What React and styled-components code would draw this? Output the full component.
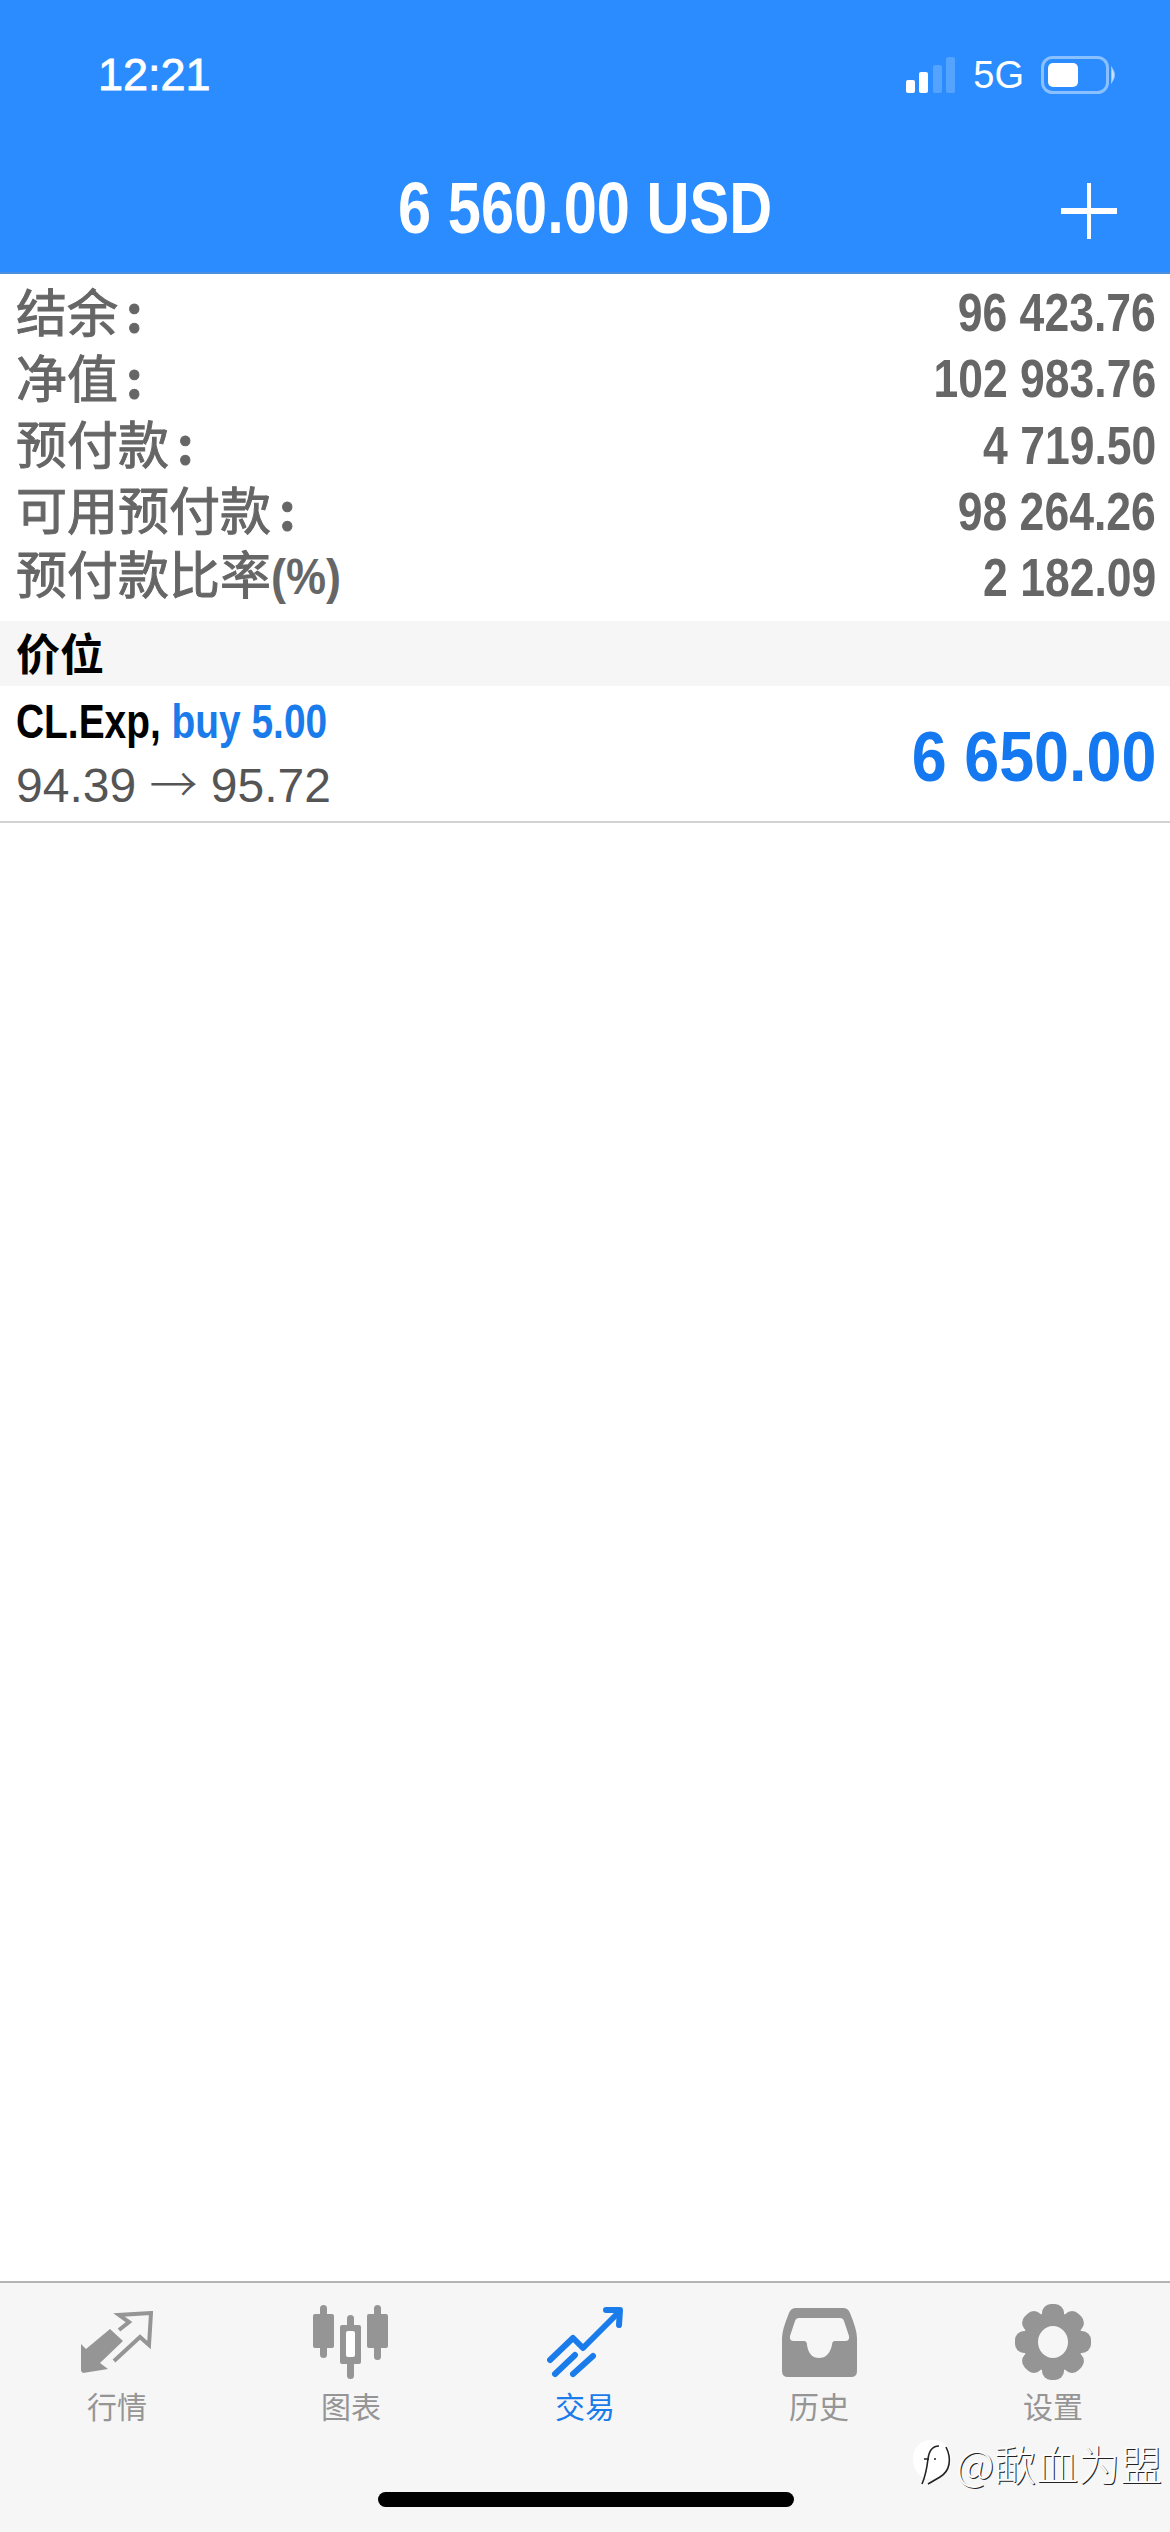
import React from "react";
import styled, { createGlobalStyle } from "styled-components";

const GlobalStyle = createGlobalStyle`
  html, body {
    margin: 0;
    padding: 0;
    background: #fff;
  }
  * {
    box-sizing: border-box;
  }
`;

const sans = `"Liberation Sans", "Noto Sans CJK SC", sans-serif`;
const cjk = `"Noto Sans CJK SC", sans-serif`;

const Page = styled.div`
  position: relative;
  width: 1170px;
  height: 2532px;
  display: flex;
  flex-direction: column;
  background: #fff;
  overflow: hidden;
`;

const Header = styled.header`
  height: 274px;
  background: #2a8cff;
  border-bottom: 2px solid #4a8fe0;
  color: #fff;
  display: flex;
  flex-direction: column;
`;

const StatusBar = styled.div`
  height: 150px;
  padding: 50px 53px 0 98px;
  display: flex;
  justify-content: space-between;
  align-items: flex-start;
`;

const Time = styled.span`
  font: 400 45px/50px ${sans};
  -webkit-text-stroke: 0.8px #fff;
`;

const StatusIcons = styled.div`
  display: flex;
  align-items: center;
  height: 50px;
  gap: 17px;
`;

const Network = styled.span`
  font: 400 38px/50px ${sans};
`;

const TitleBar = styled.div`
  position: relative;
  display: flex;
  justify-content: center;
  height: 100px;
  padding-top: 18px;
`;

/* the app's bold face is a condensed one, so the nearest installed face is squeezed */
const Condensed = styled.span`
  display: inline-block;
  white-space: nowrap;
  transform: scaleX(${(p) => p.$scale});
  transform-origin: ${(p) => p.$origin || "right"} center;
`;

const Title = styled.h1`
  margin: 0;
  font: 700 72px/80px ${sans};
`;

const AddButton = styled.svg`
  position: absolute;
  right: 53px;
  top: 33px;
`;

const Summary = styled.section`
  padding: 7px 14px 9px 16px;
`;

const SummaryRow = styled.div`
  height: 66.25px;
  display: flex;
  justify-content: space-between;
  align-items: center;
  color: #666;
`;

const SummaryLabel = styled.span`
  padding-bottom: 9px;
  font: 400 51px/60px ${cjk};
  -webkit-text-stroke: 1px #666;
`;

const Colon = styled.span`
  margin-left: 8px;
  font-weight: 700;
`;

const Percent = styled.span`
  display: inline-block;
  font: 700 50px/60px ${sans};
  -webkit-text-stroke: 0;
  transform: scaleX(0.9);
  transform-origin: left center;
`;

const SummaryValue = styled.span`
  padding-bottom: 2px;
  font: 700 53px/60px ${sans};
`;

const SectionBand = styled.div`
  height: 65px;
  padding-left: 16px;
  background: #f6f6f6;
  color: #000;
  font: 700 44px/62px ${cjk};
`;

const PositionRow = styled.div`
  height: 137px;
  padding: 0 14px 0 16px;
  display: flex;
  justify-content: space-between;
  align-items: center;
  border-bottom: 2px solid #d2d2d2;
`;

const PositionInfo = styled.div`
  display: flex;
  flex-direction: column;
  gap: 5px;
`;

const PositionTitle = styled.div`
  color: #000;
  font: 700 48px/54px ${sans};
`;

const BuyLabel = styled.span`
  color: #1a7bea;
`;

const PositionPrices = styled.div`
  color: #555;
  font: 400 48px/54px ${sans};
`;

const Arrow = styled.span`
  font: 300 48px/54px ${cjk};
`;

const Profit = styled.div`
  color: #1479f0;
  font: 700 71px/80px ${sans};
  padding-top: 6px;
`;

const Spacer = styled.main`
  flex: 1;
`;

const TabBar = styled.nav`
  height: 251px;
  padding-top: 21px;
  background: #f6f6f6;
  border-top: 2px solid #b4b4b4;
  display: grid;
  grid-template-columns: repeat(5, 234px);
`;

const Tab = styled.div`
  display: flex;
  flex-direction: column;
  align-items: center;
  color: ${(p) => (p.$active ? "#1a7bea" : "#959595")};
`;

const TabIcon = styled.div`
  height: 76px;
  display: flex;
  align-items: center;
  justify-content: center;
`;

const TabLabel = styled.span`
  margin-top: 7px;
  font: 400 30px/36px ${cjk};
`;

const HomeIndicator = styled.div`
  position: absolute;
  left: 378px;
  bottom: 25px;
  width: 416px;
  height: 15px;
  border-radius: 8px;
  background: #000;
`;

const Watermark = styled.div`
  position: absolute;
  left: 912px;
  top: 2439px;
  display: flex;
  align-items: center;
  gap: 4px;
  color: #fbfbfb;
  font: 300 42px/46px ${cjk};
  text-shadow: 1px 1px 0 #222;
  white-space: nowrap;
`;

const SignalIcon = () => (
  <svg width="50" height="36" viewBox="0 0 50 36" fill="#fff">
    <rect x="0" y="23" width="9" height="13" rx="2" />
    <rect x="13" y="15" width="9" height="21" rx="2" />
    <rect x="27" y="8" width="9" height="28" rx="2" opacity="0.2" />
    <rect x="40" y="0" width="9" height="36" rx="2" opacity="0.2" />
  </svg>
);

const BatteryIcon = () => (
  <svg width="76" height="38" viewBox="0 0 76 38" fill="none">
    <rect x="1.5" y="1.5" width="65" height="35" rx="10" stroke="#fff" strokeOpacity="0.45" strokeWidth="3" />
    <rect x="7" y="7" width="30" height="24" rx="5" fill="#fff" />
    <path d="M71 13 Q75 19 71 25 Z" fill="#fff" fillOpacity="0.5" stroke="#fff" strokeOpacity="0.5" strokeWidth="2" />
  </svg>
);

const QuotesIcon = () => (
  <svg width="72" height="62" viewBox="0 0 72 62">
    <path d="M0 33 L5 38 L29 18 L42 30 L19 52 L27 58 L2 62 L0 60 Z" fill="currentColor" />
    <path d="M38 19 L48 11 L38 4 L70 2 L68 34 L59 26 L33 50" fill="none" stroke="currentColor" strokeWidth="4" />
  </svg>
);

const ChartIcon = () => (
  <svg width="76" height="74" viewBox="0 0 76 74">
    <g fill="currentColor">
      <rect x="7" y="0" width="7" height="53" rx="3.5" />
      <rect x="0" y="9" width="21" height="34" rx="2" />
      <rect x="34" y="10" width="7" height="64" rx="3.5" />
      <rect x="27" y="20" width="21" height="39" rx="2" />
      <rect x="61" y="0" width="7" height="55" rx="3.5" />
      <rect x="54" y="9" width="21" height="34" rx="2" />
    </g>
    <rect x="33" y="26" width="9" height="26" rx="2" fill="#fff" />
  </svg>
);

const TradeIcon = () => (
  <svg width="76" height="71" viewBox="0 0 76 71" fill="none" stroke="currentColor" strokeWidth="6" strokeLinecap="round" strokeLinejoin="round">
    <path d="M3 53 L26 31 L36 41 L72 5" />
    <path d="M59 3 L73 3 L72 18" />
    <path d="M8 67 L28 48" />
    <path d="M26 67 L46 49" />
  </svg>
);

const HistoryIcon = () => (
  <svg width="75" height="69" viewBox="0 0 75 69">
    <path
      fillRule="evenodd"
      fill="currentColor"
      d="M14 0 H61 Q66 0 68 5 Q75 22 75 30 V63 Q75 69 69 69 H6 Q0 69 0 63 V30 Q0 22 7 5 Q9 0 14 0 Z M17 10 Q14 10 13 13 L8 28 Q7 33 12 33 H22 Q25 33 25 37 Q27 50 37 50 Q47 50 50 37 Q50 33 53 33 H63 Q68 33 67 28 L62 13 Q61 10 58 10 Z"
    />
  </svg>
);

const SettingsIcon = () => (
  <svg width="76" height="76" viewBox="0 0 76 76">
    <g fill="currentColor">
      <circle cx="38" cy="38" r="30" />
      {[0, 45, 90, 135, 180, 225, 270, 315].map((deg) => (
        <rect key={deg} x="27" y="0" width="22" height="22" rx="9" transform={`rotate(${deg} 38 38)`} />
      ))}
    </g>
    <ellipse cx="38" cy="38" rx="15" ry="16" fill="#f6f6f6" />
  </svg>
);

const WatermarkLogo = () => (
  <svg width="40" height="48" viewBox="0 0 40 48" fill="none">
    <path d="M20 1 C32 1 39 8 39 20 C39 33 30 40 20 40 C8 40 1 32 1 20 C1 8 8 1 20 1 Z" fill="#fff" />
    <path d="M27 7 C20 7 17 12 16 20 C15 28 14 36 10 45" stroke="#222" strokeWidth="1.6" />
    <path d="M12 20 L17 20 M22 20 L24 20" stroke="#222" strokeWidth="1.6" />
    <path d="M34 8 C40 20 38 32 28 38 L16 45" stroke="#222" strokeWidth="1.6" />
  </svg>
);

const summary = [
  { label: "结余", value: "96 423.76", colon: true },
  { label: "净值", value: "102 983.76", colon: true },
  { label: "预付款", value: "4 719.50", colon: true },
  { label: "可用预付款", value: "98 264.26", colon: true },
  { label: "预付款比率", value: "2 182.09", percent: true },
];

const tabs = [
  { label: "行情", Icon: QuotesIcon },
  { label: "图表", Icon: ChartIcon },
  { label: "交易", Icon: TradeIcon, active: true },
  { label: "历史", Icon: HistoryIcon },
  { label: "设置", Icon: SettingsIcon },
];

export default function App() {
  return (
    <Page>
      <GlobalStyle />
      <Header>
        <StatusBar>
          <Time>12:21</Time>
          <StatusIcons>
            <SignalIcon />
            <Network>5G</Network>
            <BatteryIcon />
          </StatusIcons>
        </StatusBar>
        <TitleBar>
          <Title>
            <Condensed $scale={0.827} $origin="center">6 560.00 USD</Condensed>
          </Title>
          <AddButton width="56" height="56" viewBox="0 0 56 56" fill="#fff">
            <rect x="26" y="0" width="4" height="56" />
            <rect x="0" y="25" width="56" height="6" />
          </AddButton>
        </TitleBar>
      </Header>

      <Summary>
        {summary.map((row) => (
          <SummaryRow key={row.label}>
            <SummaryLabel>
              {row.label}
              {row.colon && <Colon>:</Colon>}
              {row.percent && <Percent>(%)</Percent>}
            </SummaryLabel>
            <SummaryValue>
              <Condensed $scale={0.84}>{row.value}</Condensed>
            </SummaryValue>
          </SummaryRow>
        ))}
      </Summary>

      <SectionBand>价位</SectionBand>

      <PositionRow>
        <PositionInfo>
          <PositionTitle>
            <Condensed $scale={0.81} $origin="left">
              CL.Exp, <BuyLabel>buy 5.00</BuyLabel>
            </Condensed>
          </PositionTitle>
          <PositionPrices>
            94.39 <Arrow>→</Arrow> 95.72
          </PositionPrices>
        </PositionInfo>
        <Profit>
          <Condensed $scale={0.885}>6 650.00</Condensed>
        </Profit>
      </PositionRow>

      <Spacer />

      <TabBar>
        {tabs.map(({ label, Icon, active }) => (
          <Tab key={label} $active={active}>
            <TabIcon>
              <Icon />
            </TabIcon>
            <TabLabel>{label}</TabLabel>
          </Tab>
        ))}
      </TabBar>

      <HomeIndicator />
      <Watermark>
        <WatermarkLogo />
        <span>@歃血为盟</span>
      </Watermark>
    </Page>
  );
}
